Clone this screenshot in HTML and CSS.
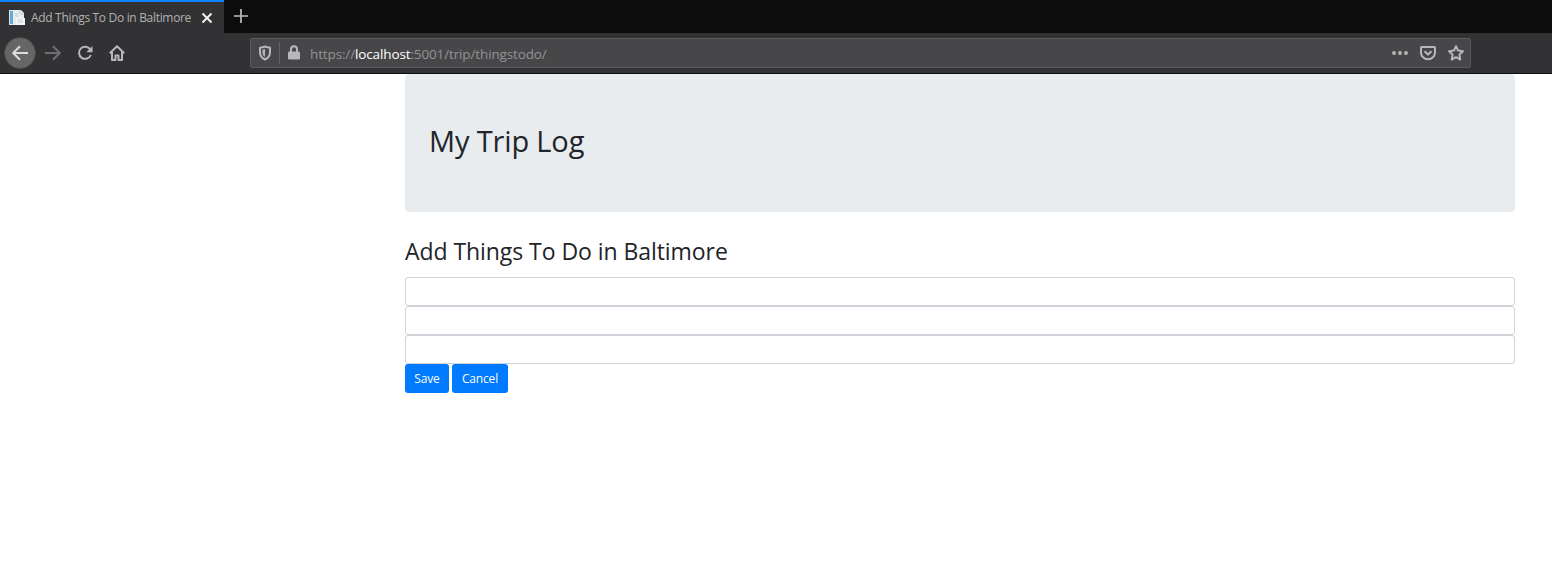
FILE: index.html
```html
<!DOCTYPE html>
<html lang="en">
<head>
<meta charset="utf-8">
<title>Add Things To Do in Baltimore</title>
<link rel="stylesheet" href="styles.css">
</head>
<body>
<header class="browser">
  <div class="tabs">
    <div class="tab">
      <svg class="favicon" width="18" height="18" viewBox="0 0 18 18"><path d="M1 1h11v15H1z" fill="#d9e6ef"/><path d="M2 2h3v13H2z" fill="#62a9d4"/><path d="M5 1h8l3 3v12H5z" fill="#e9edf0"/><path d="M12 1v4h4M7 5h3M7 7h3" fill="none" stroke="#b7c9d6"/><path d="M8 9h9v7H8z" fill="#f4f5f6"/><path d="M9.500 11h5M9.500 13h6" stroke="#c6cbd0"/></svg>
      <span class="tab-title">Add Things To Do in Baltimore</span>
      <svg class="close" width="12" height="12" viewBox="0 0 12 12"><path d="M1.500 1.500l9 9M10.500 1.500l-9 9" stroke="#f5f5f5" stroke-width="1.900"/></svg>
    </div>
    <svg class="plus" width="14" height="14" viewBox="0 0 14 14"><path d="M7 0v14M0 7h14" stroke="#bdbdbd" stroke-width="1.700"/></svg>
  </div>
  <div class="toolbar">
    <div class="nav">
      <span class="back"><svg width="16" height="16" viewBox="0 0 16 16"><path d="M16 8H1.500M8 1.200L1.200 8L8 14.800" class="line light"/></svg></span>
      <svg width="16" height="16" viewBox="0 0 16 16"><path d="M0 8h14.500M8 1.200L14.800 8L8 14.800" class="line dim"/></svg>
      <svg width="16" height="16" viewBox="0 0 16 16"><path d="M13.300 4.500A6.100 6.100 0 1 0 13.800 10" class="line"/><path d="M15.500 1v6.200H9.300z" class="solid"/></svg>
      <svg width="16" height="16" viewBox="0 0 16 16"><path d="M.8 8.200L8 1.300l7.200 6.900M3 7v8h3.500v-4.500h3V15H13V7" class="line"/></svg>
    </div>
    <div class="urlbar">
      <svg class="shield" width="14" height="16" viewBox="0 0 14 16"><path d="M7 1.500c2 .8 3.600 1.100 5 1.200v4.500c0 3.500-2 5.900-5 7.300c-3-1.400-5-3.800-5-7.300V2.700c1.400-.1 3-.4 5-1.200z" class="line"/><path d="M7 4v8c-1.600-1-2.500-2.500-2.500-4.800V4.700z" class="solid"/></svg>
      <span class="divider"></span>
      <svg class="lock" width="12" height="16" viewBox="0 0 12 16"><path d="M3 8V4.300a3 3 0 0 1 6 0V8" class="line"/><rect x="0" y="6.500" width="12" height="8" rx="1.300" class="solid"/></svg>
      <span class="url">https://<b>localhost</b>:5001/trip/thingstodo/</span>
      <span class="actions">
        <svg width="16" height="16" viewBox="0 0 16 16"><circle cx="2" cy="8" r="1.900" class="solid"/><circle cx="8" cy="8" r="1.900" class="solid"/><circle cx="14" cy="8" r="1.900" class="solid"/></svg>
        <svg width="16" height="16" viewBox="0 0 16 16"><path d="M1.800 2h12.400a.8.800 0 0 1 .8.800v4.700a7 6.800 0 0 1-14 0V2.800A.8.800 0 0 1 1.800 2z" class="line"/><path d="M4.500 6.300L8 9.600l3.500-3.300" class="line"/></svg>
        <svg width="16" height="16" viewBox="0 0 16 16"><path d="M8 1.200l2.100 4.400 4.800.6-3.500 3.400.9 4.900L8 12.200l-4.300 2.300.9-4.900L1.100 6.200l4.800-.6z" class="line"/></svg>
      </span>
    </div>
  </div>
</header>
<main class="container">
  <section class="jumbotron"><h1>My Trip Log</h1></section>
  <h2>Add Things To Do in Baltimore</h2>
  <form>
    <input class="field" type="text" aria-label="First thing to do">
    <input class="field" type="text" aria-label="Second thing to do">
    <input class="field" type="text" aria-label="Third thing to do">
    <div class="buttons"><button class="save" type="submit">Save</button><button class="cancel" type="button">Cancel</button></div>
  </form>
</main>
</body>
</html>
```
FILE: styles.css
```css
* { box-sizing: border-box; }
body { margin: 0; background: #fff; color: #212529; font-family: "Open Sans", "Noto Sans", sans-serif; height: 561px; overflow: hidden; }
svg { display: block; flex: none; }
.browser { height: 74px; background: #323234; border-bottom: 1px solid #0c0c0d; }
.tabs { display: flex; height: 33px; background: #0c0c0c; }
.tab { display: flex; align-items: center; width: 224px; height: 33px; padding: 0 11px 0 8px; border-top: 2px solid #0a84ff; background: #323234; }
.tab-title { width: 165px; margin-left: 5px; font-size: 12px; letter-spacing: -.32px; color: #b1b1b3; white-space: nowrap; }
.close { margin-left: 5px; }
.plus { margin: 9px 0 0 10px; }
.toolbar { display: flex; align-items: center; height: 40px; }
.nav { display: flex; align-items: center; gap: 16px; width: 250px; padding-left: 4px; }
.back { display: flex; align-items: center; justify-content: center; width: 32px; height: 32px; margin-right: -7px; border: 1px solid #4a4a4b; border-radius: 50%; background: #666; }
.line { fill: none; stroke: #b8b8ba; stroke-width: 2; stroke-linejoin: round; }
.light { stroke: #ddd; }
.dim { stroke: #707072; }
.solid { fill: #b8b8ba; }
.urlbar { display: flex; align-items: center; width: 1221px; height: 30px; padding: 0 6px 0 7px; border: 1px solid #5b5b5d; border-radius: 2px; background: #474749; }
.divider { width: 1px; height: 22px; margin: 0 8px 0 7px; background: #626264; }
.url { margin-left: 10px; padding-top: 2px; font-size: 13.5px; color: #939395; letter-spacing: -.13px; white-space: nowrap; }
.url b { font-weight: 400; color: #fff; }
.actions { display: flex; gap: 12px; margin-left: auto; }
.container { width: 1110px; margin-left: 405px; }
.jumbotron { height: 138px; padding: 47px 24px; border-radius: 4px; background: #e9ecef; }
h1, h2 { margin: 0; font-weight: 400; white-space: nowrap; }
h1 { font-size: 29px; line-height: 39px; letter-spacing: -.15px; }
h2 { height: 42px; margin-top: 23px; font-size: 23px; line-height: 32px; letter-spacing: -.06px; }
.field { display: block; width: 100%; height: 29px; padding: 4px 8px; border: 1px solid #ced4da; border-radius: 3px; background: #fff; font: 12px "Open Sans", sans-serif; }
.buttons { display: flex; gap: 3px; }
button { height: 29px; padding: 0; border: 0; border-radius: 3px; background: #007bff; color: #fff; font: 12px "Open Sans", sans-serif; letter-spacing: -.15px; }
.save { width: 44px; }
.cancel { width: 56px; }
```
